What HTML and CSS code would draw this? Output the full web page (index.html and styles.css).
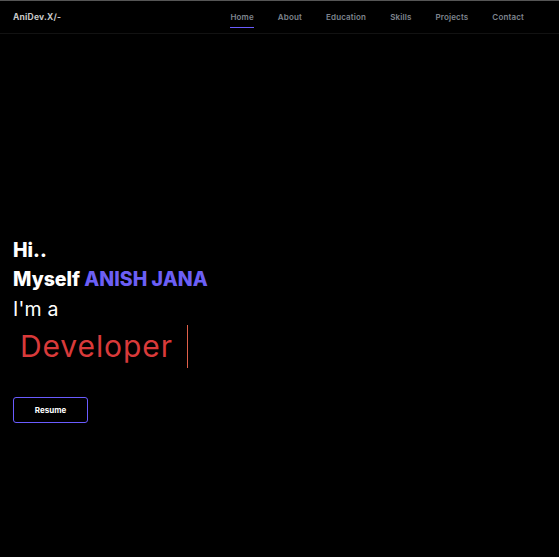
FILE: index.html
```html
<!DOCTYPE html>
<html>
<head>
<meta charset="utf-8">
<link rel="stylesheet" href="styles.css">
</head>
<body>
<header class="nav">
  <div class="logo">AniDev.X/-</div>
  <nav class="links">
    <a class="link active">Home</a>
    <a class="link">About</a>
    <a class="link">Education</a>
    <a class="link">Skills</a>
    <a class="link">Projects</a>
    <a class="link">Contact</a>
  </nav>
</header>
<main class="hero">
  <div class="hi">Hi..</div>
  <div class="myself">Myself <span class="name">ANISH JANA</span></div>
  <div class="ima">I'm a</div>
  <div class="typed"><span class="role">Developer</span><span class="cursor"></span></div>
  <button class="resume">Resume</button>
</main>
</body>
</html>
```
FILE: styles.css
```css
* { box-sizing: border-box; }
html, body { margin: 0; padding: 0; background: #000; }
body {
  font-family: "Inter", "Noto Sans", sans-serif;
  color: #fff;
  height: 557px;
  overflow: hidden;
  border-top: 1px solid #555;
}
.nav {
  height: 33px;
  display: flex;
  align-items: center;
  justify-content: space-between;
  padding: 0 35px 0 13px;
  border-bottom: 1px solid #121212;
}
.logo {
  font-size: 8.5px;
  font-weight: 700;
  color: #c8c8c8;
  letter-spacing: 0.2px;
}
.links {
  display: flex;
  gap: 24px;
}
.link {
  position: relative;
  font-size: 8px;
  font-weight: 600;
  color: #7f858f;
  letter-spacing: 0.15px;
  padding: 6px 0;
}
.link.active::after {
  content: "";
  position: absolute;
  left: 0;
  right: 0;
  bottom: 0;
  height: 1px;
  background: #6a5cff;
}
.hero {
  display: flex;
  flex-direction: column;
  align-items: flex-start;
  padding: 202px 13px 0 13px;
}
.hi, .myself {
  font-size: 19.5px;
  font-weight: 800;
  line-height: 29px;
  letter-spacing: 0;
}
.name { color: #6c5ff5; }
.ima {
  font-size: 19.5px;
  font-weight: 400;
  line-height: 30px;
  letter-spacing: 0.2px;
}
.typed {
  display: flex;
  align-items: center;
  height: 46px;
  margin-top: -1px;
}
.role {
  font-size: 30px;
  font-weight: 400;
  color: #d93a3a;
  padding-left: 7px;
  letter-spacing: 0.9px;
}
.cursor {
  display: inline-block;
  width: 1px;
  height: 43px;
  background: #e0604a;
  margin-left: 14px;
}
.resume {
  margin-top: 28px;
  width: 75px;
  height: 26px;
  background: #000;
  border: 1px solid #6a5cff;
  border-radius: 3px;
  color: #fff;
  font-family: "Inter", "Noto Sans", sans-serif;
  font-size: 8px;
  font-weight: 700;
}
```
